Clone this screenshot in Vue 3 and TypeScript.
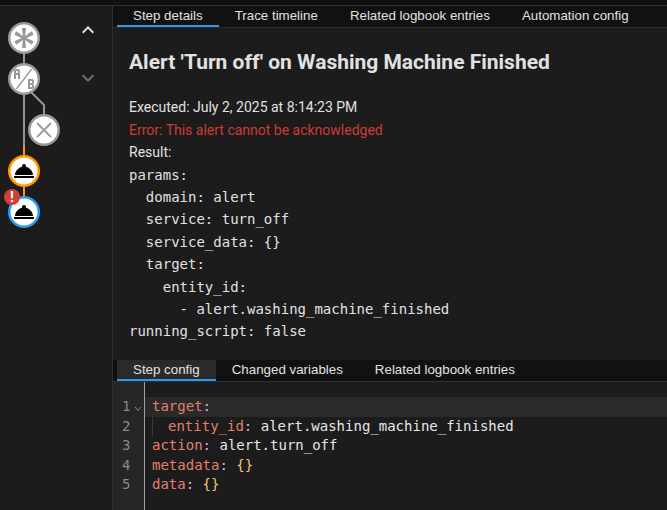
<script setup lang="ts">
const topTabs = ['Step details', 'Trace timeline', 'Related logbook entries', 'Automation config']
const bottomTabs = ['Step config', 'Changed variables', 'Related logbook entries']
const yaml = `params:
  domain: alert
  service: turn_off
  service_data: {}
  target:
    entity_id:
      - alert.washing_machine_finished
running_script: false`
const gutter = [1, 2, 3, 4, 5]
</script>

<template>
  <div class="page">
    <div class="strip"></div>
    <div class="main">
      <aside class="side">
        <svg class="graph" width="64" height="230" viewBox="0 0 64 230">
          <g fill="none" stroke-width="2">
            <path d="M24 38V146" stroke="#949494" />
            <path d="M31 92L44 105V118" stroke="#949494" />
            <path d="M24 146V212" stroke="#ff9800" />
          </g>
          <g>
            <circle cx="24" cy="38" r="14.75" fill="#fff" stroke="#999" stroke-width="2.5" />
            <path transform="translate(12 26)" fill="#999" d="M10,2H14L13.21,9.91L19.66,5.27L21.66,8.73L14.42,12L21.66,15.27L19.66,18.73L13.21,14.09L14,22H10L10.79,14.09L4.34,18.73L2.34,15.27L9.58,12L2.34,8.73L4.34,5.27L10.79,9.91L10,2Z" />
          </g>
          <g>
            <circle cx="24" cy="79" r="14.75" fill="#fff" stroke="#999" stroke-width="2.5" />
            <path transform="translate(12 67)" fill="#999" d="M4 2A2 2 0 0 0 2 4V12H4V8H6V12H8V4A2 2 0 0 0 6 2H4M4 4H6V6H4M22 15.5V14A2 2 0 0 0 20 12H16V22H20A2 2 0 0 0 22 20V18.5A1.54 1.54 0 0 0 20.5 17A1.54 1.54 0 0 0 22 15.5M20 20H18V18H20V20M20 16H18V14H20M5.3 22H3.5L18.7 2H20.5Z" />
          </g>
          <g>
            <circle cx="44" cy="130" r="14.75" fill="#fff" stroke="#999" stroke-width="2.5" />
            <path d="M37 123L51 137M51 123L37 137" stroke="#a0a0a0" stroke-width="2" fill="none" />
          </g>
          <g>
            <circle cx="24" cy="171" r="14.75" fill="#fff" stroke="#ff9800" stroke-width="2.5" />
            <path transform="translate(12 159)" fill="#000" d="M2,17H22V19H2V17M13.84,7.79C13.94,7.55 14,7.28 14,7A2,2 0 0,0 12,5A2,2 0 0,0 10,7C10,7.28 10.06,7.55 10.16,7.79C6.25,8.6 3.27,11.93 3,16H21C20.73,11.93 17.75,8.6 13.84,7.79Z" />
          </g>
          <g>
            <circle cx="24" cy="212" r="14.75" fill="#fff" stroke="#2b9af3" stroke-width="2.5" />
            <path transform="translate(12 200)" fill="#000" d="M2,17H22V19H2V17M13.84,7.79C13.94,7.55 14,7.28 14,7A2,2 0 0,0 12,5A2,2 0 0,0 10,7C10,7.28 10.06,7.55 10.16,7.79C6.25,8.6 3.27,11.93 3,16H21C20.73,11.93 17.75,8.6 13.84,7.79Z" />
          </g>
          <circle cx="12" cy="197" r="8" fill="#d03f3a" />
          <text x="12" y="202" text-anchor="middle" class="bang">!</text>
        </svg>
        <div class="nav">
          <svg width="24" height="24" viewBox="0 0 24 24"><path fill="#e1e1e1" d="M7.41,15.41L12,10.83L16.59,15.41L18,14L12,8L6,14L7.41,15.41Z" /></svg>
          <svg width="24" height="24" viewBox="0 0 24 24"><path fill="#6f6f6f" d="M7.41,8.58L12,13.17L16.59,8.58L18,10L12,16L6,10L7.41,8.58Z" /></svg>
        </div>
      </aside>
      <section class="content">
        <nav class="tabs">
          <button v-for="(t, i) in topTabs" :key="t" class="tab" :class="{ active: i === 0 }">{{ t }}</button>
        </nav>
        <div class="details">
          <h2 class="title">Alert 'Turn off' on Washing Machine Finished</h2>
          <div class="meta">
            <div>Executed: July 2, 2025 at 8:14:23 PM</div>
            <div class="error">Error: This alert cannot be acknowledged</div>
            <div>Result:</div>
          </div>
          <pre class="yaml">{{ yaml }}</pre>
        </div>
        <nav class="tabs lower">
          <button v-for="(t, i) in bottomTabs" :key="t" class="tab" :class="{ active: i === 0 }">{{ t }}</button>
        </nav>
        <div class="editor">
          <div class="gutter">
            <div v-for="n in gutter" :key="n" class="num">
              <span>{{ n }}</span>
              <svg v-if="n === 1" class="fold" width="8" height="6" viewBox="0 0 8 6"><path d="M1 1L4 4.5L7 1" fill="none" stroke="#8a8a8a" /></svg>
            </div>
          </div>
          <div class="code">
            <div class="line current"><span class="k">target</span><span class="p">:</span></div>
            <div class="line indented"><span class="k">entity_id</span><span class="p">:</span> <span class="v">alert.washing_machine_finished</span></div>
            <div class="line"><span class="k">action</span><span class="p">:</span> <span class="v">alert.turn_off</span></div>
            <div class="line"><span class="k">metadata</span><span class="p">:</span> <span class="b">{}</span></div>
            <div class="line"><span class="k">data</span><span class="p">:</span> <span class="b">{}</span></div>
          </div>
        </div>
      </section>
    </div>
  </div>
</template>

<style>
html, body { margin: 0; background: #1c1c1c; }
</style>

<style scoped>
.page {
  width: 667px;
  height: 510px;
  overflow: hidden;
  display: flex;
  flex-direction: column;
  background: #1c1c1c;
  font-family: Roboto, sans-serif;
  color: #e1e1e1;
}
.strip {
  height: 5px;
  flex: none;
  background: #111;
  border-bottom: 1px solid #2f2f2f;
}
.main { flex: 1; display: flex; min-height: 0; }
.side {
  width: 112px;
  flex: none;
  display: flex;
  border-right: 1px solid #2f2f2f;
}
.graph { flex: none; display: block; margin-top: -6px; }
.bang { fill: #fff; font: 700 14px Roboto, sans-serif; }
.nav {
  margin: 12px 0 0 12px;
  display: flex;
  flex-direction: column;
  gap: 24px;
}
.nav svg { display: block; }
.content { flex: 1; min-width: 0; display: flex; flex-direction: column; }
.tabs {
  display: flex;
  flex: none;
  height: 22px;
  box-sizing: border-box;
  padding-left: 4px;
  background: #111;
  border-bottom: 1px solid #2f2f2f;
}
.tabs.lower { margin-top: 14px; }
.tab {
  appearance: none;
  background: none;
  border: 0;
  padding: 0 16px;
  height: 21px;
  box-sizing: border-box;
  color: #e1e1e1;
  font: 13.33px "Liberation Sans", Arial, sans-serif;
  white-space: nowrap;
  border-bottom: 2px solid transparent;
}
.tab.active { border-bottom-color: #2b9af3; }
.tabs.lower .tab.active { background: #2a2a2a; }
.details { padding: 0 16px; flex: none; height: 318px; box-sizing: border-box; }
.title {
  margin: 0;
  padding-top: 21px;
  font: 700 21px/26px Roboto, sans-serif;
  color: #e1e1e1;
}
.meta {
  margin-top: 21.3px;
  font-size: 14px;
  line-height: 22.4px;
}
.error { color: #d03a34; }
.yaml {
  margin: 0;
  font: 14px/22.4px "DejaVu Sans Mono", monospace;
  color: #e1e1e1;
}
.editor { flex: 1; display: flex; min-height: 0; }
.gutter {
  width: 32px;
  flex: none;
  padding-top: 15px;
  box-sizing: border-box;
  background: #262626;
  border-right: 1px solid #a0a0a0;
}
.num {
  height: 19.6px;
  font: 14px/19.6px "DejaVu Sans Mono", monospace;
  color: #8a8a8a;
  padding-left: 9px;
  position: relative;
}
.fold { position: absolute; left: 21px; top: 9px; }
.code {
  flex: 1;
  padding-top: 15px;
  font: 14px/19.6px "DejaVu Sans Mono", monospace;
  white-space: pre;
}
.line { height: 19.6px; padding-left: 7px; color: #e1e1e1; }
.line.current { background: #2a2a2a; }
.line.indented { box-shadow: inset 1px 0 0 #3a3a3a; margin-left: 7px; padding-left: 16px; }
.k { color: #e2806a; }
.p { color: #c4c4c4; }
.v { color: #e6e6e6; }
.b { color: #f0c674; }
</style>
